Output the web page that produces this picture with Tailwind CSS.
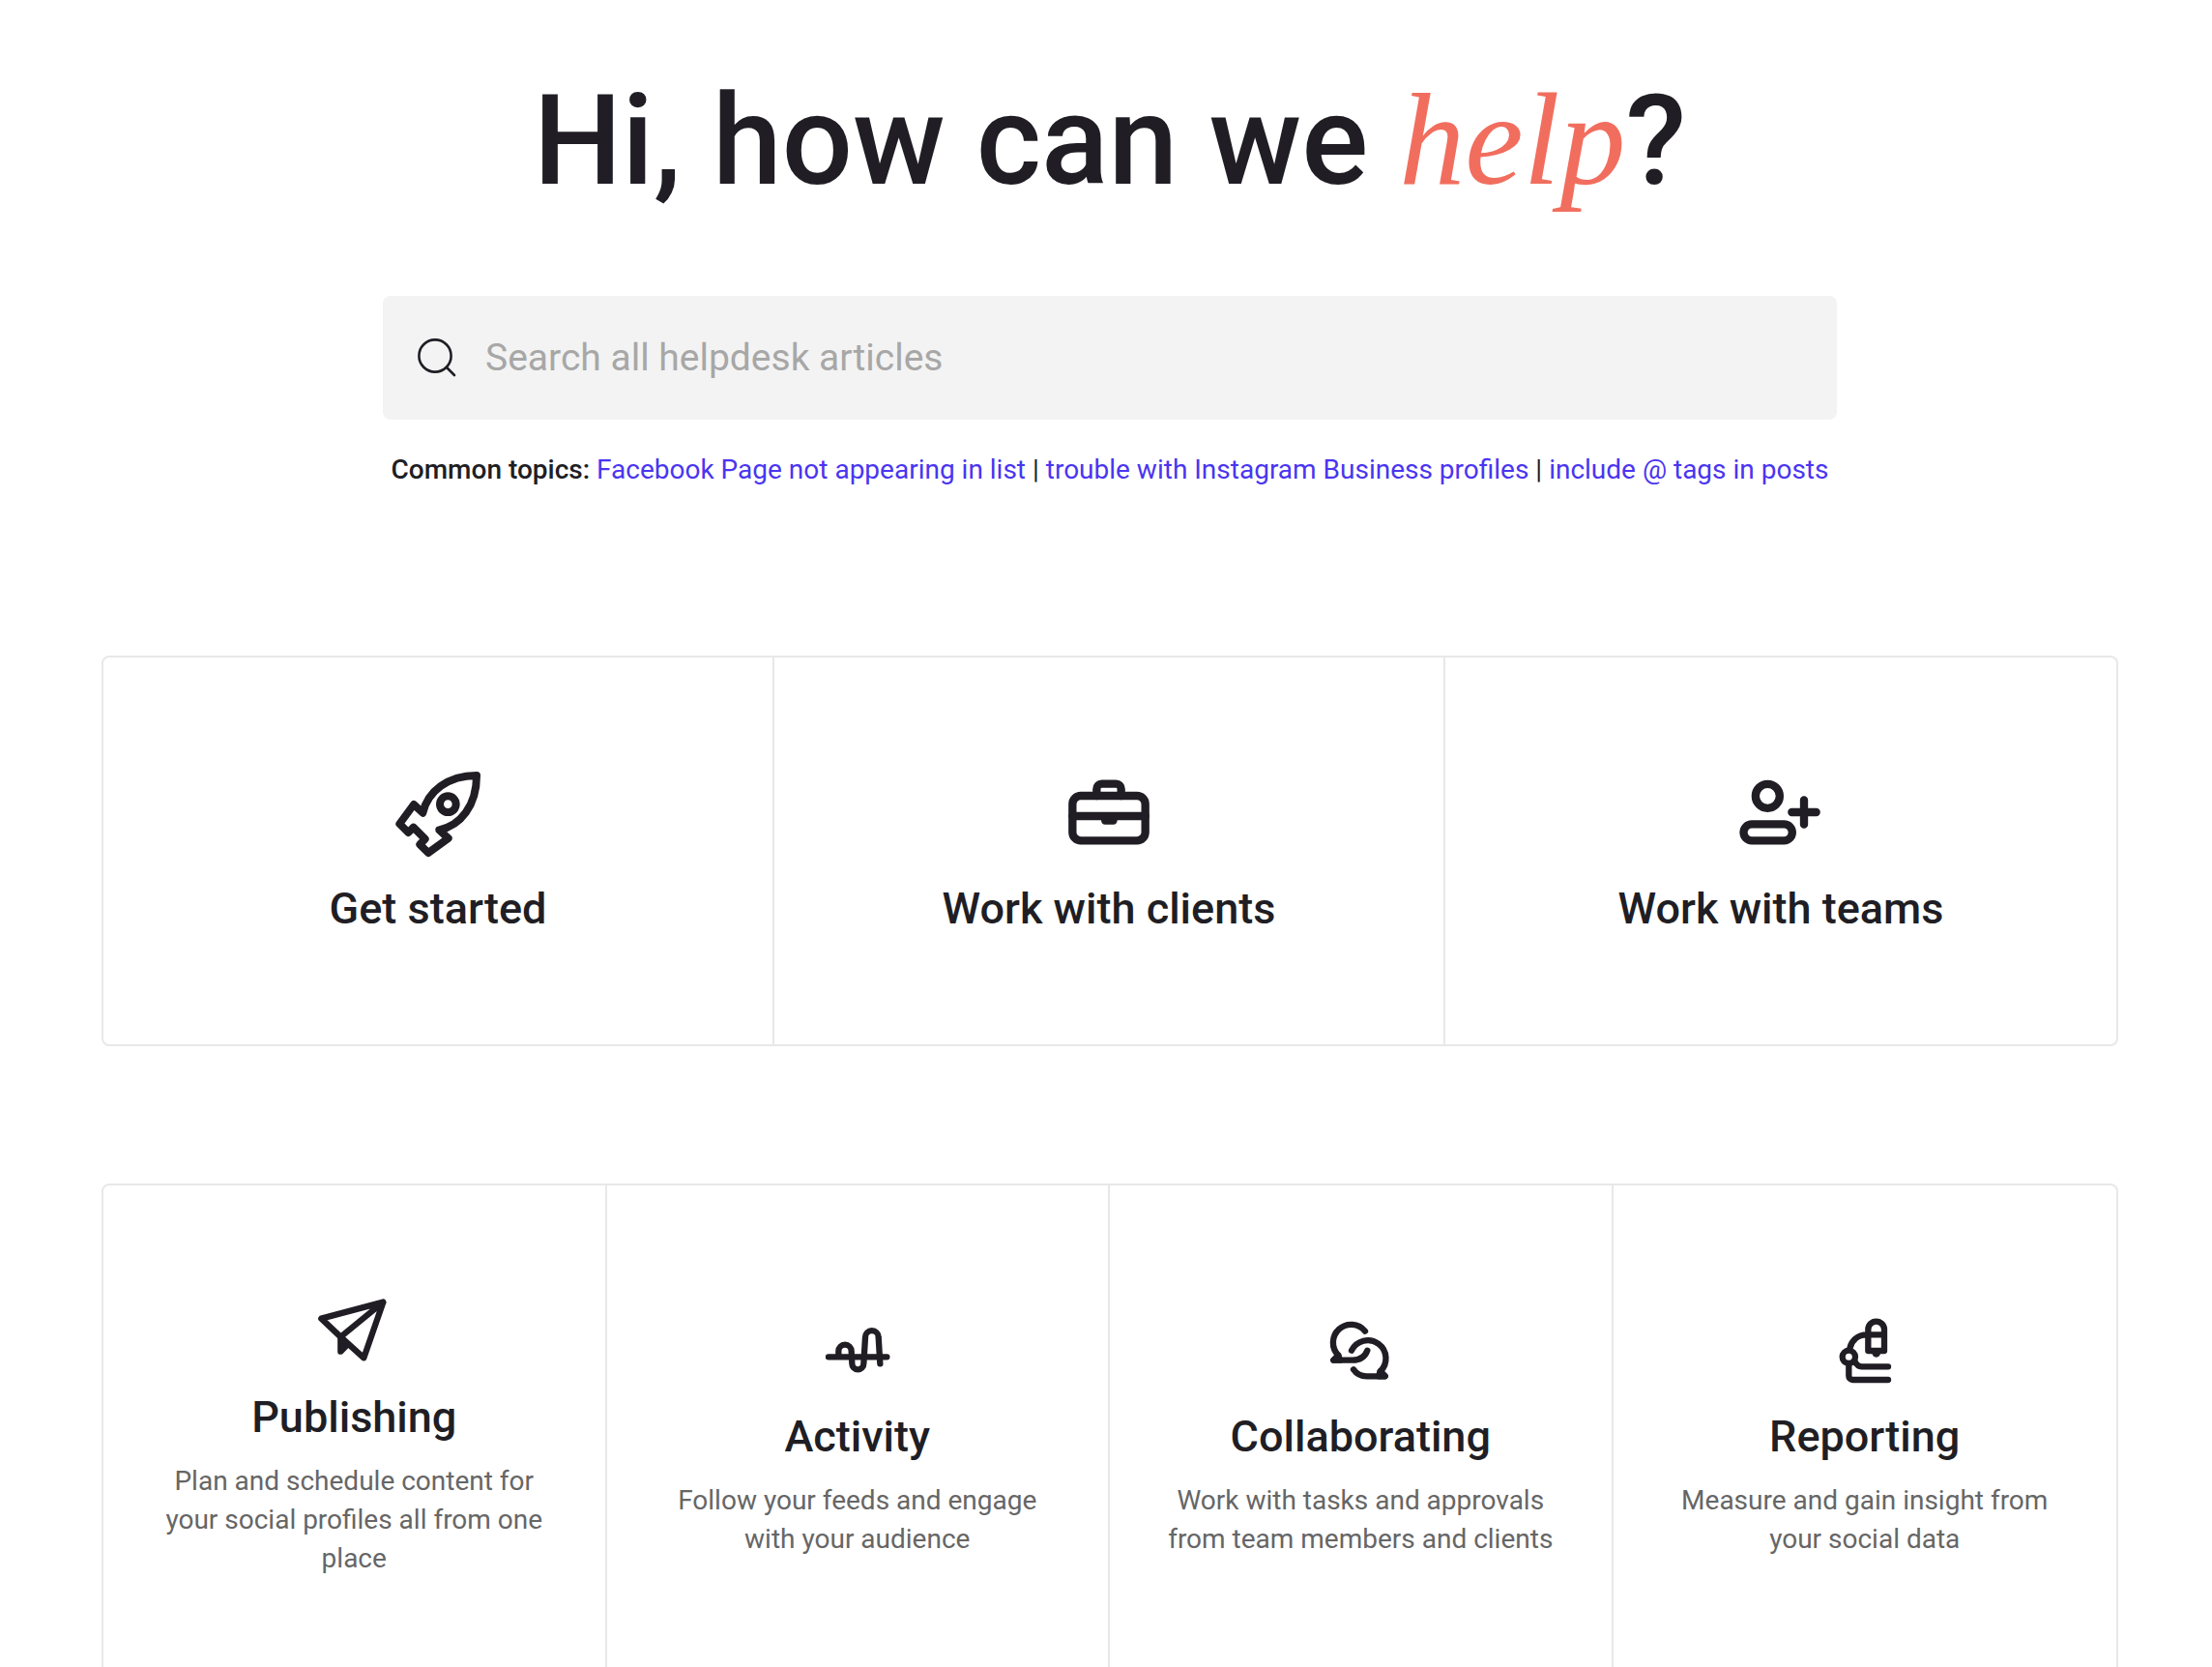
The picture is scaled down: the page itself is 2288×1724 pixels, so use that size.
<!DOCTYPE html>
<html lang="en">
<head>
    <meta charset="UTF-8">
    <meta name="viewport" content="width=device-width, initial-scale=1.0">
    <title>Helpdesk</title>
    <script src="https://cdn.jsdelivr.net/npm/@tailwindcss/browser@4"></script>
</head>
<body class="bg-white font-['Roboto',sans-serif] text-[#201e24]">
    <main class="pt-16 pl-[105px] pr-[97px]">
        <h1 class="text-center text-[129px] leading-[160px] font-medium">Hi, how can we <em class="font-['Liberation_Serif',serif] text-[136px] leading-[160px] font-normal text-[#f16e5e]">help</em>?</h1>

        <!-- Search -->
        <form class="mx-auto mt-20 flex h-32 max-w-[1504px] items-center gap-[30px] rounded-lg bg-[#f3f3f3] pl-9">
            <label for="search" class="shrink-0">
                <svg role="img" aria-label="Search" class="size-10" viewBox="0 0 40 40" fill="none" stroke="currentColor" stroke-width="2.6" stroke-linecap="round">
                    <circle cx="18" cy="18" r="16.6" />
                    <path d="M30 30l8 8" />
                </svg>
            </label>
            <input id="search" type="search" placeholder="Search all helpdesk articles" class="h-full min-w-0 flex-1 bg-transparent pr-9 text-[39px] outline-none placeholder:text-[#a7a7a7]">
        </form>
        <p class="mt-8 text-center text-[28px] leading-10">
            <strong class="font-medium">Common topics:</strong>
            <a href="#" class="text-[#4a35f0]">Facebook Page not appearing in list</a> |
            <a href="#" class="text-[#4a35f0]">trouble with Instagram Business profiles</a> |
            <a href="#" class="text-[#4a35f0]">include @ tags in posts</a>
        </p>

        <!-- Main topics -->
        <section class="mt-[172px] grid h-[404px] grid-cols-3 divide-x-2 divide-[#e8e8e8] rounded-lg border-2 border-[#e8e8e8]">
            <a href="#" class="flex flex-col items-center justify-center gap-5">
                <svg class="size-[100px]" viewBox="66 36 300 300" fill="none" stroke="currentColor" stroke-width="24" stroke-linecap="round" stroke-linejoin="round">
                    <path d="M169 182C184 116 246 66 336 66C336 160 286 221 220 235L248 261L186 306L160 280L176 263L140 227L124 243L97 216L141 156Z" />
                    <circle cx="247" cy="155" r="25" />
                </svg>
                <h2 class="text-[45px] leading-[56px] font-medium">Get started</h2>
            </a>
            <a href="#" class="flex flex-col items-center justify-center gap-5">
                <svg class="size-[100px]" viewBox="54 36 300 300" fill="none" stroke="currentColor" stroke-width="25" stroke-linecap="round" stroke-linejoin="round">
                    <rect x="91" y="129" width="226" height="139" rx="26" />
                    <path d="M166 129V108a16 16 0 0 1 16-16h44a16 16 0 0 1 16 16v21M91 192h226" />
                    <path d="M180 200h50v6q-2 12-12 12h-26q-10 0-12-12z" fill="currentColor" stroke="none" />
                </svg>
                <h2 class="text-[45px] leading-[56px] font-medium">Work with clients</h2>
            </a>
            <a href="#" class="flex flex-col items-center justify-center gap-5">
                <svg class="size-[100px]" viewBox="39 36 300 300" fill="none" stroke="currentColor" stroke-width="25" stroke-linecap="round">
                    <circle cx="148" cy="130" r="37.5" />
                    <rect x="73.500" y="217" width="151" height="51" rx="25.500" />
                    <path d="M223 180h76M261 142v76" />
                </svg>
                <h2 class="text-[45px] leading-[56px] font-medium">Work with teams</h2>
            </a>
        </section>

        <!-- Features -->
        <section class="mt-[142px] grid h-[520px] grid-cols-4 divide-x-2 divide-[#e8e8e8] rounded-lg border-2 border-[#e8e8e8] text-center">
            <a href="#" class="flex flex-col items-center justify-center px-14">
                <svg class="size-20" viewBox="48 44 240 240" fill="none" stroke="currentColor" stroke-width="19" stroke-linecap="round" stroke-linejoin="round">
                    <path d="M67 127L259 76L199 249L127 184ZM127 184L259 76" />
                    <path d="M127 184v45l22-22z" fill="currentColor" />
                </svg>
                <h2 class="mt-[22px] text-[45px] leading-[56px] font-medium">Publishing</h2>
                <p class="mt-[18px] text-[28px] leading-10 text-[#666]">Plan and schedule content for your social profiles all from one place</p>
            </a>
            <a href="#" class="flex flex-col items-center justify-center px-14">
                <svg class="size-20" viewBox="39 45 240 240" fill="none" stroke="currentColor" stroke-width="19" stroke-linecap="round" stroke-linejoin="round">
                    <path d="M69 187h181M100 187v-18a20 20 0 0 1 40 0L142 208a18 18 0 0 0 36 0L183 126a20 20 0 0 1 41 0L229 208" />
                </svg>
                <h2 class="mt-[22px] text-[45px] leading-[56px] font-medium">Activity</h2>
                <p class="mt-[18px] text-[28px] leading-10 text-[#666]">Follow your feeds and engage with your audience</p>
            </a>
            <a href="#" class="flex flex-col items-center justify-center px-14">
                <svg class="size-20" viewBox="42 45 240 240" fill="none" stroke="currentColor" stroke-width="19" stroke-linecap="round" stroke-linejoin="round">
                    <path d="M177 107A56 56 0 1 0 94 182L79 197H138C162 197 177 186 184 167" />
                    <path d="M135 167A56 56 0 1 1 224 232L239 247H182C162 247 149 238 141 226" />
                    <path d="M94 182L79 197h20zM224 232L239 247h-20z" fill="currentColor" />
                </svg>
                <h2 class="mt-[22px] text-[45px] leading-[56px] font-medium">Collaborating</h2>
                <p class="mt-[18px] text-[28px] leading-10 text-[#666]">Work with tasks and approvals from team members and clients</p>
            </a>
            <a href="#" class="flex flex-col items-center justify-center px-14">
                <svg class="size-20" viewBox="30 45 240 240" fill="none" stroke="currentColor" stroke-width="19" stroke-linecap="round" stroke-linejoin="round">
                    <path d="M160 168v-66a25 25 0 0 1 50 0v66zM160 118h50M103 160C108 136 128 118 155 118" />
                    <circle cx="100" cy="187" r="20" />
                    <path d="M118 200C124 212 130 217 140 217H222M100 210v36a12 12 0 0 0 12 12h110" />
                    <path d="M172 174h27q-3 14-14 14t-13-14z" fill="currentColor" stroke="none" />
                </svg>
                <h2 class="mt-[22px] text-[45px] leading-[56px] font-medium">Reporting</h2>
                <p class="mt-[18px] text-[28px] leading-10 text-[#666]">Measure and gain insight from your social data</p>
            </a>
        </section>
    </main>
</body>
</html>
